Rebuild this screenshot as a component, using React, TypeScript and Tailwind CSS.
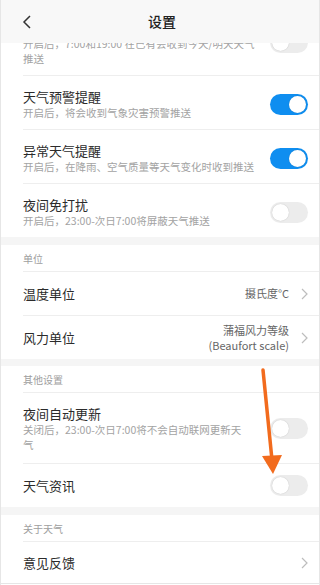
import React from "react";

const font = { fontFamily: '"Noto Sans CJK SC", "Noto Sans", sans-serif' };

function Toggle({ on }: { on: boolean }) {
  return (
    <div
      className={`w-[38px] h-[21px] rounded-full p-[2px] flex shrink-0 ${
        on ? "bg-[#0f8ef0] justify-end" : "bg-[#ececec] justify-start"
      }`}
    >
      <div className="w-[17px] h-[17px] rounded-full bg-white shadow-[0_0_1px_rgba(0,0,0,0.25)]" />
    </div>
  );
}

function Chevron() {
  return (
    <svg width="7" height="12" viewBox="0 0 7 12" className="shrink-0">
      <path d="M1 1l5 5-5 5" fill="none" stroke="#bdbdbd" strokeWidth="1.2" />
    </svg>
  );
}

function SwitchRow({
  title, sub, on, last, pb = "pb-[9px]",
}: { title: string; sub: React.ReactNode; on: boolean; last?: boolean; pb?: string }) {
  return (
    <div className="pl-[22px]">
      <div
        className={`flex items-center gap-4 pr-[11px] pt-3 ${pb} ${
          last ? "" : "border-b border-[#eeeeee]"
        }`}
      >
        <div className="flex-1 min-w-0">
          <div className="text-[13px] leading-[17px] text-[#2b2b2b]">{title}</div>
          <div className="text-[10.5px] leading-[15px] text-[#a3a3a3] whitespace-nowrap">{sub}</div>
        </div>
        <Toggle on={on} />
      </div>
    </div>
  );
}

function PlainRow({
  title, value, toggle, last, h = "h-[44px]",
}: { title: string; value?: React.ReactNode; toggle?: boolean; last?: boolean; h?: string }) {
  return (
    <div className="pl-[22px]">
      <div
        className={`flex items-center pr-[11px] ${h} ${last ? "" : "border-b border-[#eeeeee]"}`}
      >
        <div className="flex-1 text-[13px] text-[#2b2b2b]">{title}</div>
        {toggle !== undefined ? (
          <Toggle on={toggle} />
        ) : (
          <div className="flex items-center gap-3">
            {value && (
              <div className="text-[11px] leading-[15px] text-[#666666] text-right">{value}</div>
            )}
            <Chevron />
          </div>
        )}
      </div>
    </div>
  );
}

function SectionLabel({ text }: { text: string }) {
  return (
    <div className="pl-[22px]">
      <div className="h-[27px] flex items-center text-[10px] text-[#9e9e9e] border-b border-[#eeeeee]">
        {text}
      </div>
    </div>
  );
}

function Gap({ h }: { h: string }) {
  return <div className={`${h} bg-[#f5f5f5]`} />;
}

export default function App() {
  return (
    <div
      className="relative w-[320px] h-[585px] overflow-hidden bg-white border-x border-[#e6e6e6] flex flex-col"
      style={font}
    >
      {/* Header */}
      <div className="h-[43px] shrink-0 bg-[#f8f8f8] flex items-center relative z-10">
        <div className="w-[50px] pl-[21px] flex items-center">
          <svg width="10" height="14" viewBox="0 0 10 14">
            <path d="M8 1L2 7l6 6" fill="none" stroke="#333333" strokeWidth="1.5" />
          </svg>
        </div>
        <div className="flex-1 text-center text-[14px] font-medium text-[#222222]">设置</div>
        <div className="w-[46px]" />
      </div>

      {/* List */}
      <div className="flex-1 overflow-hidden">
        <div className="mt-[-36px]">
          <SwitchRow
            title="早晚天气提醒"
            sub={<>开启后，7:00和19:00 在已有会收到今天/明天天气<br />推送</>}
            on={false}
          />
          <SwitchRow title="天气预警提醒" sub="开启后，将会收到气象灾害预警推送" on />
          <SwitchRow title="异常天气提醒" sub="开启后，在降雨、空气质量等天气变化时收到推送" on />
          <SwitchRow title="夜间免打扰" sub="开启后，23:00-次日7:00将屏蔽天气推送" on={false} last />
          <Gap h="h-[8px]" />
          <SectionLabel text="单位" />
          <PlainRow title="温度单位" value="摄氏度°C" />
          <PlainRow
            title="风力单位"
            h="h-[43px]"
            value={<>蒲福风力等级<br />(Beaufort scale)</>}
            last
          />
          <Gap h="h-[7px]" />
          <SectionLabel text="其他设置" />
          <SwitchRow
            title="夜间自动更新"
            sub={<>关闭后，23:00-次日7:00将不会自动联网更新天<br />气</>}
            on={false}
            pb="pb-[11px]"
          />
          <PlainRow title="天气资讯" toggle={false} h="h-[43px]" last />
          <Gap h="h-[8px]" />
          <SectionLabel text="关于天气" />
          <div className="border-b border-[#e6e6e6]">
            <PlainRow title="意见反馈" h="h-[41px]" last />
          </div>
        </div>
      </div>

      {/* Annotation arrow */}
      <svg
        className="absolute inset-0 w-full h-full pointer-events-none z-20"
        viewBox="0 0 318 585"
      >
        <line x1="262" y1="370" x2="271" y2="460" stroke="#f26b1d" strokeWidth="3.5" strokeLinecap="round" />
        <polygon points="261,456 281,455 272,474" fill="#f26b1d" />
      </svg>
    </div>
  );
}
